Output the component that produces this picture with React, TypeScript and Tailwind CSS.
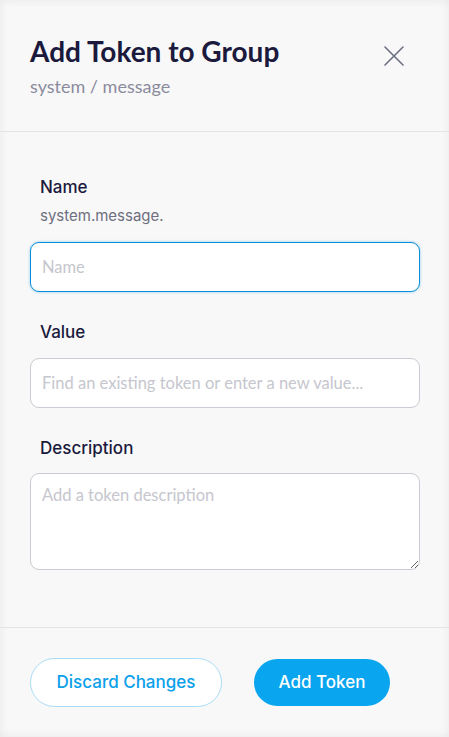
import React from "react";

export default function App() {
  return (
    <div className="w-full h-[737px] bg-[#f8f8f9] shadow-[inset_0_0_10px_rgba(0,0,0,0.07)] flex flex-col overflow-hidden">
      <div className="h-[132px] shrink-0 border-b border-[#e3e3e8] px-[30px] pt-[34px] flex justify-between">
        <div>
          <h1 className="font-[Lato,sans-serif] text-[28px] leading-[34px] font-bold text-[#1b1a3d]">
            Add Token to Group
          </h1>
          <div className="font-[Lato,sans-serif] mt-[7px] text-[18px] leading-[22px] text-[#8b8b9c]">
            system / message
          </div>
        </div>
        <button className="mt-[12px] mr-[15px] w-[20px] h-[20px] text-[#6b7080]" aria-label="Close">
          <svg viewBox="0 0 20 20" width="20" height="20" fill="none" stroke="currentColor" strokeWidth="1.6" strokeLinecap="round">
            <path d="M1 1L19 19M19 1L1 19" />
          </svg>
        </button>
      </div>

      <div className="flex-1 pl-[30px] pr-[29px] pt-[45px]">
        <div className="font-[Inter,sans-serif] pl-[10px] text-[17px] leading-[20px] font-medium text-[#1b1a3d]">Name</div>
        <div className="font-[Inter,sans-serif] pl-[10px] mt-[10px] text-[15px] leading-[18px] text-[#6e6e7e]">system.message.</div>
        <input
          autoFocus
          placeholder="Name"
          className="font-[Lato,sans-serif] mt-[17px] w-full h-[50px] rounded-[9px] bg-white border border-[#0b8fd8] shadow-[0_0_3px_rgba(11,143,216,0.45)] px-[11px] text-[16.5px] outline-none placeholder:text-[#c6c6ce] caret-[#1b1a3d]"
        />

        <div className="font-[Inter,sans-serif] mt-[30px] pl-[10px] text-[17px] leading-[20px] font-medium text-[#1b1a3d]">Value</div>
        <input
          placeholder="Find an existing token or enter a new value..."
          className="font-[Lato,sans-serif] mt-[16px] w-full h-[50px] rounded-[9px] bg-white border border-[#cbcbd3] px-[11px] text-[16.5px] outline-none placeholder:text-[#c6c6ce]"
        />

        <div className="font-[Inter,sans-serif] mt-[30px] pl-[10px] text-[17px] leading-[20px] font-medium text-[#1b1a3d]">Description</div>
        <textarea
          placeholder="Add a token description"
          className="font-[Lato,sans-serif] mt-[15px] block w-full h-[97px] rounded-[9px] bg-white border border-[#cbcbd3] px-[11px] py-[10px] text-[16.5px] leading-[22px] outline-none placeholder:text-[#c6c6ce]"
        />
      </div>

      <div className="h-[110px] shrink-0 border-t border-[#e3e3e8] px-[30px] pt-[30px] flex items-start gap-[32px]">
        <button className="font-[Inter,sans-serif] w-[192px] h-[49px] rounded-full bg-white border border-[#a9dcf8] text-[#0aa0ea] text-[17px] font-medium">
          Discard Changes
        </button>
        <button className="font-[Inter,sans-serif] mt-[1px] w-[136px] h-[47px] rounded-full bg-[#0aa5ef] text-white text-[17px] font-medium">
          Add Token
        </button>
      </div>
    </div>
  );
}
